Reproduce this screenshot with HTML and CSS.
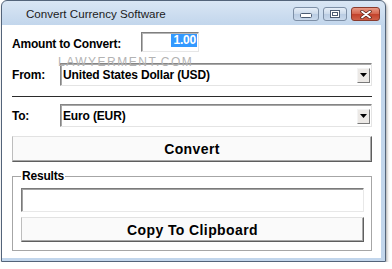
FILE: index.html
```html
<!DOCTYPE html>
<html>
<head>
<meta charset="utf-8">
<link rel="stylesheet" href="styles.css">
</head>
<body>
<div class="window">
  <div class="titlebar">
    <span class="title">Convert Currency Software</span>
    <div class="controls">
      <div class="cbtn min"><svg width="12" height="6" viewBox="0 0 12 6"><rect x="0.5" y="0.5" width="11" height="4" rx="1" fill="#fff" stroke="#4b5b72"/></svg></div>
      <div class="cbtn max"><svg width="10" height="8" viewBox="0 0 10 8"><rect x="0.5" y="0.5" width="9" height="7" fill="#fff" stroke="#4b5b72"/><rect x="2.5" y="2.5" width="5" height="3" fill="#fff" stroke="#4b5b72"/></svg></div>
      <div class="cbtn close"><svg width="12" height="9" viewBox="0 0 12 9"><path d="M2 1.5 L10 7.5 M10 1.5 L2 7.5" stroke="#5a2418" stroke-width="3.4" stroke-linecap="round"/><path d="M2 1.5 L10 7.5 M10 1.5 L2 7.5" stroke="#fff" stroke-width="1.8" stroke-linecap="round"/></svg></div>
    </div>
  </div>
  <div class="client">
    <div class="row amount">
      <span class="label lbl-amount">Amount to Convert:</span>
      <div class="edit"><span class="sel">1.00</span></div>
    </div>
    <div class="row combo-row from">
      <span class="label lbl-short">From:</span>
      <div class="combo"><span class="combo-text">United States Dollar (USD)</span><span class="drop"><svg width="7" height="4" viewBox="0 0 7 4"><path d="M0 0 H7 L3.5 4 Z" fill="#000"/></svg></span></div>
    </div>
    <div class="sep"></div>
    <div class="row combo-row to">
      <span class="label lbl-short">To:</span>
      <div class="combo"><span class="combo-text">Euro (EUR)</span><span class="drop"><svg width="7" height="4" viewBox="0 0 7 4"><path d="M0 0 H7 L3.5 4 Z" fill="#000"/></svg></span></div>
    </div>
    <div class="btn convert">Convert</div>
    <fieldset class="group">
      <legend>Results</legend>
      <div class="result"></div>
      <div class="btn copy">Copy To Clipboard</div>
    </fieldset>
  </div>
  <div class="watermark">LAWYERMENT.COM</div>
</div>
</body>
</html>
```
FILE: styles.css
```css
* { box-sizing: border-box; }
body {
  margin: 0;
  background: #fff;
  font-family: "Liberation Sans", Arial, sans-serif;
}
.window {
  position: relative;
  margin-left: 1px;
  width: 385px;
  height: 262px;
  border: 1px solid #53647a;
  border-radius: 6px 6px 0 0;
  padding: 0 4px 3px 0;
  background: linear-gradient(#d9e6f4, #c2d6ec 24px, #c2d6ec);
  box-shadow: 1px 2px 3px rgba(0,0,0,.35);
  display: flex;
  flex-direction: column;
}
.titlebar {
  height: 24px;
  flex: none;
  display: flex;
  align-items: flex-start;
  padding: 0 1px 0 24px;
}
.title {
  flex: 1;
  margin-top: 6px;
  font-size: 11.6px;
  line-height: 14px;
  color: #1b1b1b;
}
.controls {
  display: flex;
  gap: 4px;
  margin-top: 6px;
}
.cbtn {
  height: 14px;
  border: 1px solid #7d8fa6;
  border-radius: 3px;
  display: flex;
  align-items: center;
  justify-content: center;
  background: linear-gradient(#e6eef8, #cbd9ea 50%, #b9cce3 51%, #c9d9ec);
}
.cbtn.min { width: 26px; padding-top: 4px; }
.cbtn.max { width: 24px; }
.cbtn.close {
  width: 29px;
  border-color: #8a3a2c;
  background: linear-gradient(#e89a86, #d4644c 50%, #c2412a 51%, #cf6048);
}
.client {
  flex: 1;
  background: #fff;
  padding: 7px 9px 0 10px;
  display: flex;
  flex-direction: column;
}
.row {
  display: flex;
  align-items: center;
}
.label {
  font-size: 12px;
  font-weight: bold;
  letter-spacing: -0.2px;
  color: #000;
}
.lbl-amount { width: 129px; padding-top: 3px; }
.lbl-short { width: 48px; }
.edit {
  width: 58px;
  height: 20px;
  border: 1px solid;
  border-color: #7f7f7f #e6e6e6 #e6e6e6 #7f7f7f;
  box-shadow: inset 1px 1px 0 #b5b5b5;
  display: flex;
  justify-content: flex-end;
  align-items: flex-start;
  padding: 1px 1px 0 0;
}
.sel {
  background: #3399ff;
  color: #fff;
  font-size: 12px;
  font-weight: bold;
  line-height: 13px;
  padding: 0 1px 0 2px;
  letter-spacing: -0.2px;
}
.combo-row { margin-top: 11px; }
.combo-row.to { margin-top: 7px; }
.combo {
  flex: 1;
  height: 23px;
  border: 1px solid;
  border-color: #858585 #e4e4e4 #e4e4e4 #858585;
  box-shadow: inset 1px 1px 0 #a8a8a8;
  display: flex;
  align-items: center;
  padding: 1px 1px 0 2px;
}
.combo-text {
  flex: 1;
  font-size: 12px;
  font-weight: bold;
  letter-spacing: -0.15px;
  color: #000;
}
.drop {
  width: 13px;
  height: 15px;
  border: 1px solid;
  border-color: #f4f4f4 #7a7a7a #7a7a7a #f4f4f4;
  background: #ece9e6;
  display: flex;
  align-items: center;
  justify-content: center;
}
.sep {
  margin-top: 10px;
  height: 1px;
  background: #2b2b2b;
}
.btn {
  border: 1px solid;
  border-color: #e2e2e2 #5f5f5f #5f5f5f #bdbdbd;
  box-shadow: inset -1px -1px 0 #a9a9a9;
  background: #fafafa;
  display: flex;
  align-items: center;
  justify-content: center;
  font-size: 14px;
  font-weight: bold;
  letter-spacing: 0.4px;
  color: #000;
}
.convert {
  margin-top: 9px;
  height: 26px;
}
.group {
  margin: 7px 0 0 0;
  padding: 5px 7px 8px 8px;
  border: 1px solid #a6a6a6;
  min-width: 0;
}
.group legend {
  padding: 0 1px;
  font-size: 12px;
  line-height: 14px;
  font-weight: bold;
  letter-spacing: -0.2px;
  color: #000;
}
.result {
  height: 24px;
  border: 1px solid;
  border-color: #7a7a7a #e8e8e8 #e8e8e8 #7a7a7a;
  box-shadow: inset 1px 1px 0 #a3a3a3;
  background: #fff;
}
.copy {
  margin-top: 5px;
  height: 25px;
}
.watermark {
  position: absolute;
  left: 56px;
  top: 54px;
  font-size: 12px;
  letter-spacing: 1.5px;
  color: #b3b3b3;
  pointer-events: none;
}
```
